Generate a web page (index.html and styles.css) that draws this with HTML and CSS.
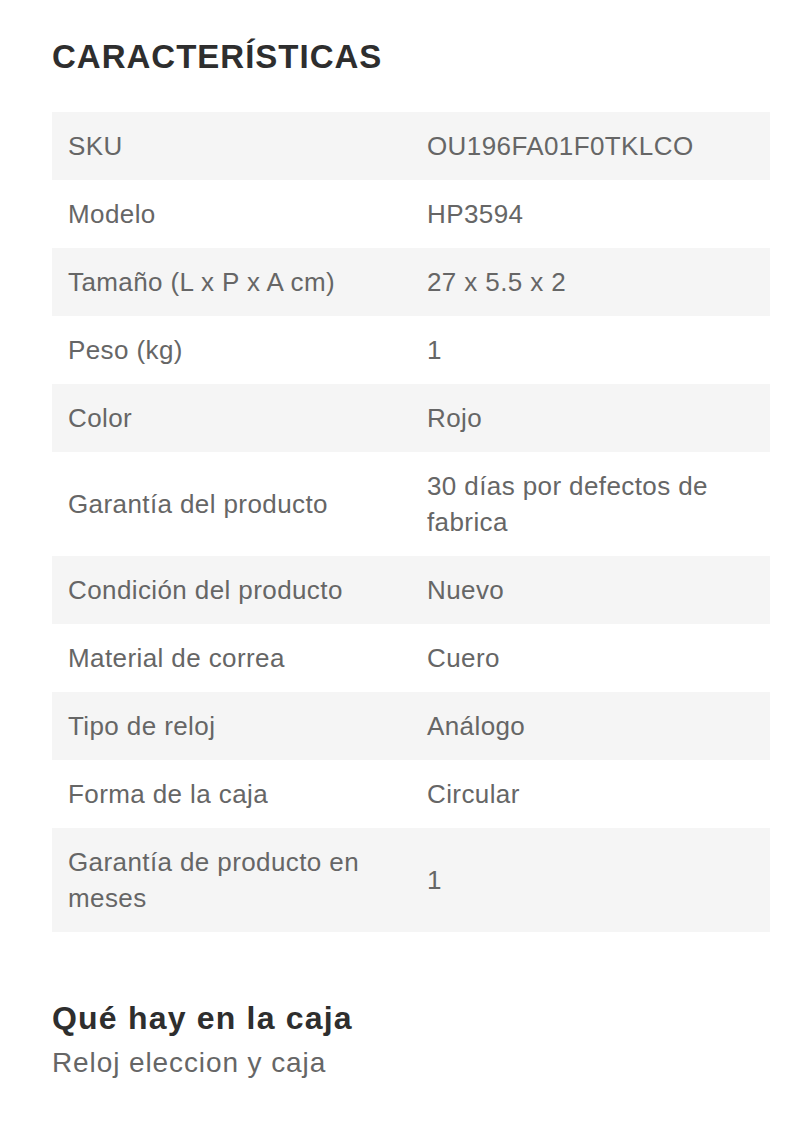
FILE: index.html
```html
<!DOCTYPE html>
<html lang="es">
<head>
<meta charset="utf-8">
<link rel="stylesheet" href="styles.css">
</head>
<body>
<div class="page">
  <h2 class="title">CARACTERÍSTICAS</h2>
  <table class="specs">
    <tbody>
      <tr><td>SKU</td><td>OU196FA01F0TKLCO</td></tr>
      <tr><td>Modelo</td><td>HP3594</td></tr>
      <tr><td>Tamaño (L x P x A cm)</td><td>27 x 5.5 x 2</td></tr>
      <tr><td>Peso (kg)</td><td>1</td></tr>
      <tr><td>Color</td><td>Rojo</td></tr>
      <tr><td>Garantía del producto</td><td>30 días por defectos de fabrica</td></tr>
      <tr><td>Condición del producto</td><td>Nuevo</td></tr>
      <tr><td>Material de correa</td><td>Cuero</td></tr>
      <tr><td>Tipo de reloj</td><td>Análogo</td></tr>
      <tr><td>Forma de la caja</td><td>Circular</td></tr>
      <tr><td>Garantía de producto en meses</td><td>1</td></tr>
    </tbody>
  </table>
  <h3 class="box-title">Qué hay en la caja</h3>
  <p class="box-text">Reloj eleccion y caja</p>
</div>
</body>
</html>
```
FILE: styles.css
```css
html, body {
  margin: 0;
  padding: 0;
  background: #ffffff;
}
body {
  font-family: "Liberation Sans", Arial, sans-serif;
}
.page {
  padding: 36px 30px 0 52px;
}
.title {
  margin: 0 0 34px 0;
  font-size: 33px;
  font-weight: bold;
  color: #2e2e2e;
  line-height: 42px;
  letter-spacing: 1px;
}
.specs {
  width: 718px;
  border-collapse: collapse;
  table-layout: fixed;
}
.specs td {
  width: 50%;
  padding: 16px 16px;
  font-size: 26px;
  letter-spacing: 0.4px;
  line-height: 36px;
  color: #666666;
  vertical-align: middle;
}
.specs tr:nth-child(odd) td {
  background: #f5f5f5;
}
.box-title {
  margin: 66px 0 0 0;
  font-size: 32px;
  font-weight: bold;
  color: #2e2e2e;
  line-height: 40px;
  letter-spacing: 1.2px;
}
.box-text {
  margin: 7px 0 0 0;
  font-size: 28px;
  letter-spacing: 0.9px;
  color: #666666;
  line-height: 36px;
}
```
